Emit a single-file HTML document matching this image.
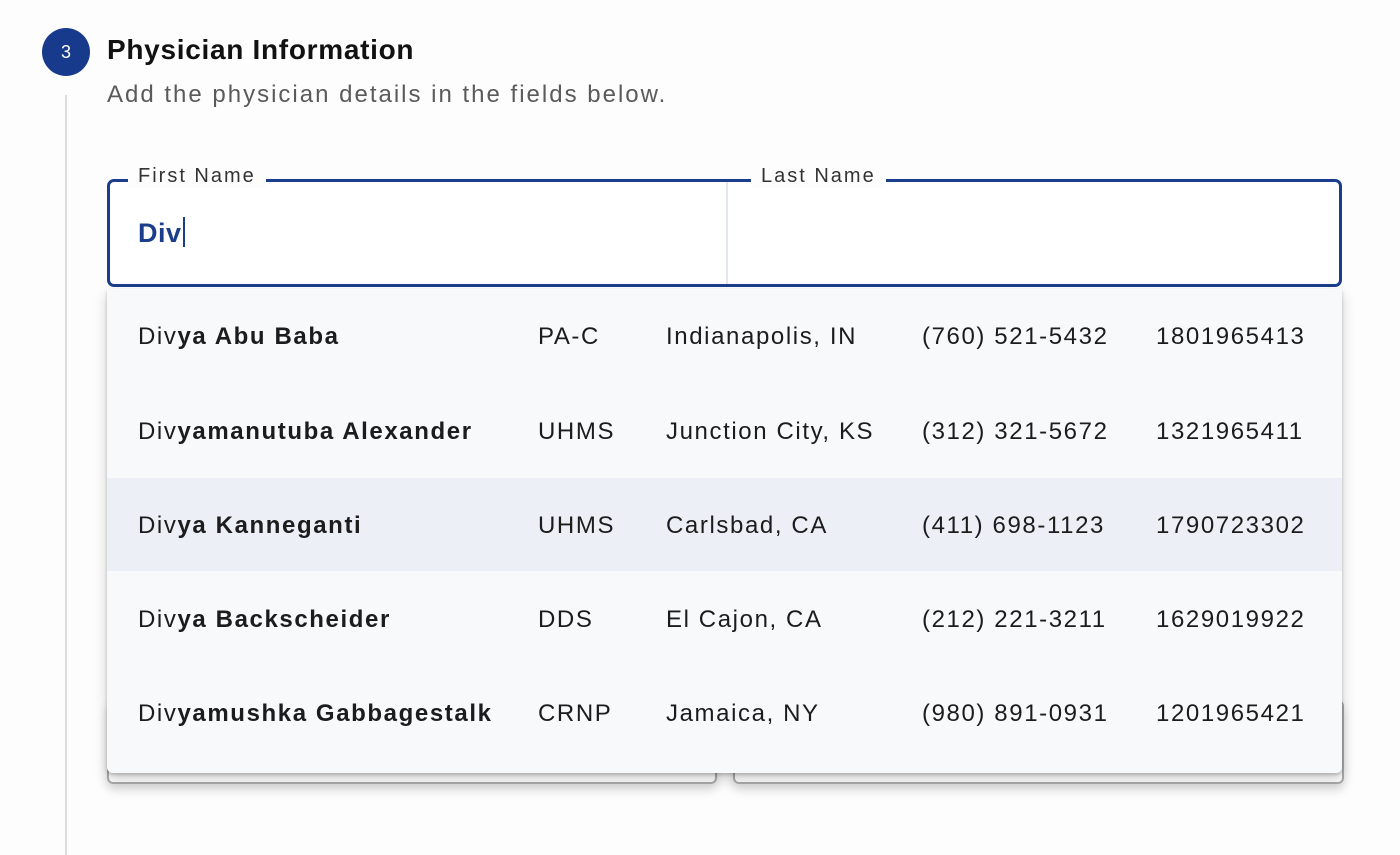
<!DOCTYPE html>
<html><head><style>
body{margin:0;width:1400px;height:848px;background:#fdfdfd;font-family:"Liberation Sans",sans-serif;position:relative;overflow:hidden;color:#1c1c1c}
.abs{position:absolute}
.row{position:absolute;left:107px;width:1235px;height:94px;font-size:24px;letter-spacing:1.6px}
.row span{position:absolute;top:34px;white-space:nowrap}
b{font-weight:700}
</style></head><body>
<div class="abs" style="left:65px;top:95px;width:2px;height:760px;background:#dcdcdc"></div>
<div class="abs" style="left:42px;top:28px;width:48px;height:48px;border-radius:50%;background:#173a8c;color:#fff;font-size:18px;text-align:center;line-height:48px">3</div>
<div class="abs" style="left:107px;top:34px;font-size:28px;font-weight:700;letter-spacing:0.7px;color:#111">Physician Information</div>
<div class="abs" style="left:107px;top:81px;font-size:24px;color:#5a5a5a;letter-spacing:2px">Add the physician details in the fields below.</div>
<!-- stacked fields behind -->
<div class="abs" style="left:107px;top:700px;width:606px;height:80px;border:2px solid #aaa;border-radius:6px;box-shadow:0 6px 10px rgba(0,0,0,.15)"></div>
<div class="abs" style="left:733px;top:700px;width:607px;height:80px;border:2px solid #aaa;border-radius:6px;box-shadow:0 6px 10px rgba(0,0,0,.15)"></div>
<!-- input -->
<div class="abs" style="left:107px;top:179px;width:1229px;height:102px;border:3px solid #1a3e8c;border-radius:7px;background:#fff"></div>
<div class="abs" style="left:726px;top:182px;width:2px;height:102px;background:#e2e6ee"></div>
<div class="abs" style="left:128px;top:165px;padding:0 10px;background:#fdfdfd;font-size:20px;color:#333;letter-spacing:2px">First Name</div>
<div class="abs" style="left:751px;top:165px;padding:0 10px;background:#fdfdfd;font-size:20px;color:#333;letter-spacing:2px">Last Name</div>
<div class="abs" style="left:138px;top:217px;font-size:27px;font-weight:700;color:#1a3e8c;letter-spacing:0.5px">Div<span style="display:inline-block;width:2px;height:30px;background:#1a3e8c;vertical-align:-5px;margin-left:1px"></span></div>
<!-- dropdown -->
<div class="abs" style="left:107px;top:289px;width:1235px;height:484px;background:#f8f9fb;border-radius:0 0 6px 6px;box-shadow:0 6px 14px rgba(0,0,0,.18),0 2px 3px rgba(0,0,0,.2)"></div>
<div class="abs" style="left:107px;top:478px;width:1235px;height:93px;background:#ecf0f6"></div>
<div class="row" style="top:289px"><span style="left:31px">Div<b>ya Abu Baba</b></span><span style="left:431px">PA-C</span><span style="left:559px">Indianapolis, IN</span><span style="left:815px">(760) 521-5432</span><span style="left:1049px">1801965413</span></div>
<div class="row" style="top:384px"><span style="left:31px">Div<b>yamanutuba Alexander</b></span><span style="left:431px">UHMS</span><span style="left:559px">Junction City, KS</span><span style="left:815px">(312) 321-5672</span><span style="left:1049px">1321965411</span></div>
<div class="row" style="top:478px"><span style="left:31px">Div<b>ya Kanneganti</b></span><span style="left:431px">UHMS</span><span style="left:559px">Carlsbad, CA</span><span style="left:815px">(411) 698-1123</span><span style="left:1049px">1790723302</span></div>
<div class="row" style="top:572px"><span style="left:31px">Div<b>ya Backscheider</b></span><span style="left:431px">DDS</span><span style="left:559px">El Cajon, CA</span><span style="left:815px">(212) 221-3211</span><span style="left:1049px">1629019922</span></div>
<div class="row" style="top:666px"><span style="left:31px">Div<b>yamushka Gabbagestalk</b></span><span style="left:431px">CRNP</span><span style="left:559px">Jamaica, NY</span><span style="left:815px">(980) 891-0931</span><span style="left:1049px">1201965421</span></div>
</body></html>
